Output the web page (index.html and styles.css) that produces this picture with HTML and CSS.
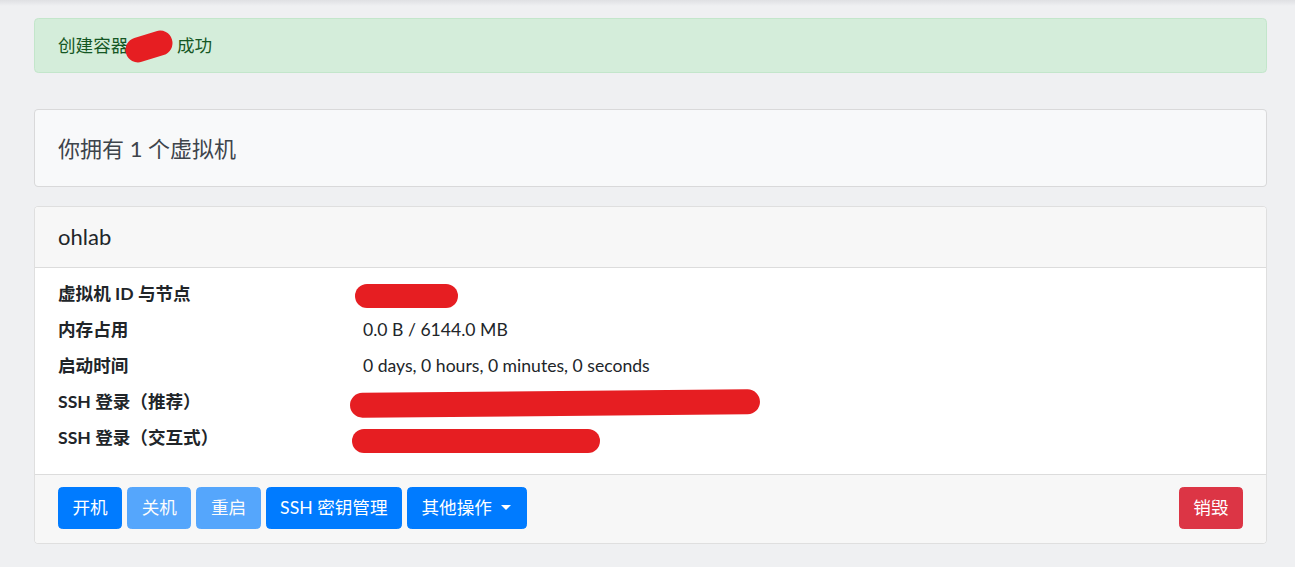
FILE: index.html
```html
<!DOCTYPE html>
<html lang="zh-CN">
<head>
<meta charset="utf-8">
<title>虚拟机</title>
<link rel="stylesheet" href="styles.css">
</head>
<body>
<main class="container">
  <div class="alert">创建容器<span class="redact redact-alert"></span> 成功</div>

  <section class="card card-count">
    <div class="count-body">你拥有 1 个虚拟机</div>
  </section>

  <section class="card card-vm">
    <header class="card-header">ohlab</header>
    <div class="card-body">
      <dl class="info">
        <dt>虚拟机 ID 与节点</dt>
        <dd><span class="redact redact-id"></span></dd>
        <dt>内存占用</dt>
        <dd>0.0 B / 6144.0 MB</dd>
        <dt>启动时间</dt>
        <dd>0 days, 0 hours, 0 minutes, 0 seconds</dd>
        <dt>SSH 登录（推荐）</dt>
        <dd><span class="redact redact-ssh1"></span></dd>
        <dt>SSH 登录（交互式）</dt>
        <dd><span class="redact redact-ssh2"></span></dd>
      </dl>
    </div>
    <footer class="card-footer">
      <div class="btn-group">
        <button class="btn btn-primary">开机</button>
        <button class="btn btn-primary disabled">关机</button>
        <button class="btn btn-primary disabled">重启</button>
        <button class="btn btn-primary">SSH 密钥管理</button>
        <button class="btn btn-primary dropdown-toggle">其他操作<span class="caret"></span></button>
      </div>
      <button class="btn btn-danger">销毁</button>
    </footer>
  </section>
</main>
</body>
</html>
```

FILE: styles.css
```css
* { box-sizing: border-box; }

html, body { margin: 0; padding: 0; }

body {
  background: linear-gradient(#dfe0e3 0, #eff0f2 6px) no-repeat, #eff0f2;
  color: #212529;
  font-family: "Lato", "Noto Sans CJK SC", sans-serif;
  font-size: 17.6px;
  line-height: 26.4px;
}

.container {
  width: 1233px;
  margin-left: 34px;
  padding-top: 18px;
}

.alert {
  height: 55px;
  padding: 13.7px 22px 13.2px 23px;
  background: #d4edda;
  border: 1px solid #c3e6cb;
  border-radius: 4.4px;
  color: #155724;
  margin-bottom: 36px;
}

.redact {
  display: inline-block;
  background: #e61e22;
  border-radius: 13px;
  vertical-align: middle;
}

.redact-alert {
  width: 48px;
  height: 25px;
  margin-left: -3px;
  margin-right: -1px;
  transform: rotate(-17deg);
  position: relative;
  top: -1px;
}

.card {
  background: #fff;
  border: 1px solid rgba(0, 0, 0, 0.125);
  border-radius: 4.4px;
  overflow: hidden;
}

.card-count {
  background: #f8f9fa;
  height: 78px;
  margin-bottom: 19px;
}

.count-body {
  padding: 21.5px 23px;
  font-size: 22px;
  line-height: 33px;
  color: #3e444b;
}

.card-header {
  height: 61px;
  padding: 13px 23px;
  font-size: 22px;
  line-height: 33px;
  background: #f7f7f7;
  border-bottom: 1px solid #dcdcdc;
  color: #212529;
}

.card-body {
  padding: 8px 23px 18px;
}

.info {
  display: grid;
  grid-template-columns: 305px 1fr;
  margin: 0;
}

.info dt,
.info dd {
  margin: 0;
  padding: 4.8px 0;
  height: 36px;
}

.info dt {
  font-weight: 700;
}

.redact-id {
  width: 103px;
  height: 24px;
  margin-left: -8px;
  margin-top: 1px;
}

.redact-ssh1 {
  width: 410px;
  height: 25px;
  margin-left: -13px;
  transform: rotate(-0.5deg);
  margin-top: 1px;
}

.redact-ssh2 {
  width: 248px;
  height: 24px;
  margin-left: -11px;
  margin-top: 4px;
}

.card-footer {
  display: flex;
  justify-content: space-between;
  align-items: center;
  padding: 12px 23px 14px;
  background: #f7f7f7;
  border-top: 1px solid #dcdcdc;
  height: 69px;
}

.btn-group {
  display: flex;
  gap: 5px;
}

.btn {
  font-family: inherit;
  font-size: 17.6px;
  line-height: 26.4px;
  padding: 6.7px 13.5px;
  height: 42px;
  border: 1px solid transparent;
  border-radius: 4.4px;
  color: #fff;
  cursor: pointer;
  display: inline-flex;
  align-items: center;
}

.btn-primary {
  background: #007bff;
  border-color: #007bff;
}

.btn-primary.disabled {
  opacity: 0.65;
}

.btn-danger {
  background: #dc3545;
  border-color: #dc3545;
}

.dropdown-toggle {
  padding-right: 15px;
}

.caret {
  display: inline-block;
  margin-left: 9px;
  width: 0;
  height: 0;
  border-top: 5.3px solid #fff;
  border-left: 5.3px solid transparent;
  border-right: 5.3px solid transparent;
  position: relative;
  top: -1px;
}
```
